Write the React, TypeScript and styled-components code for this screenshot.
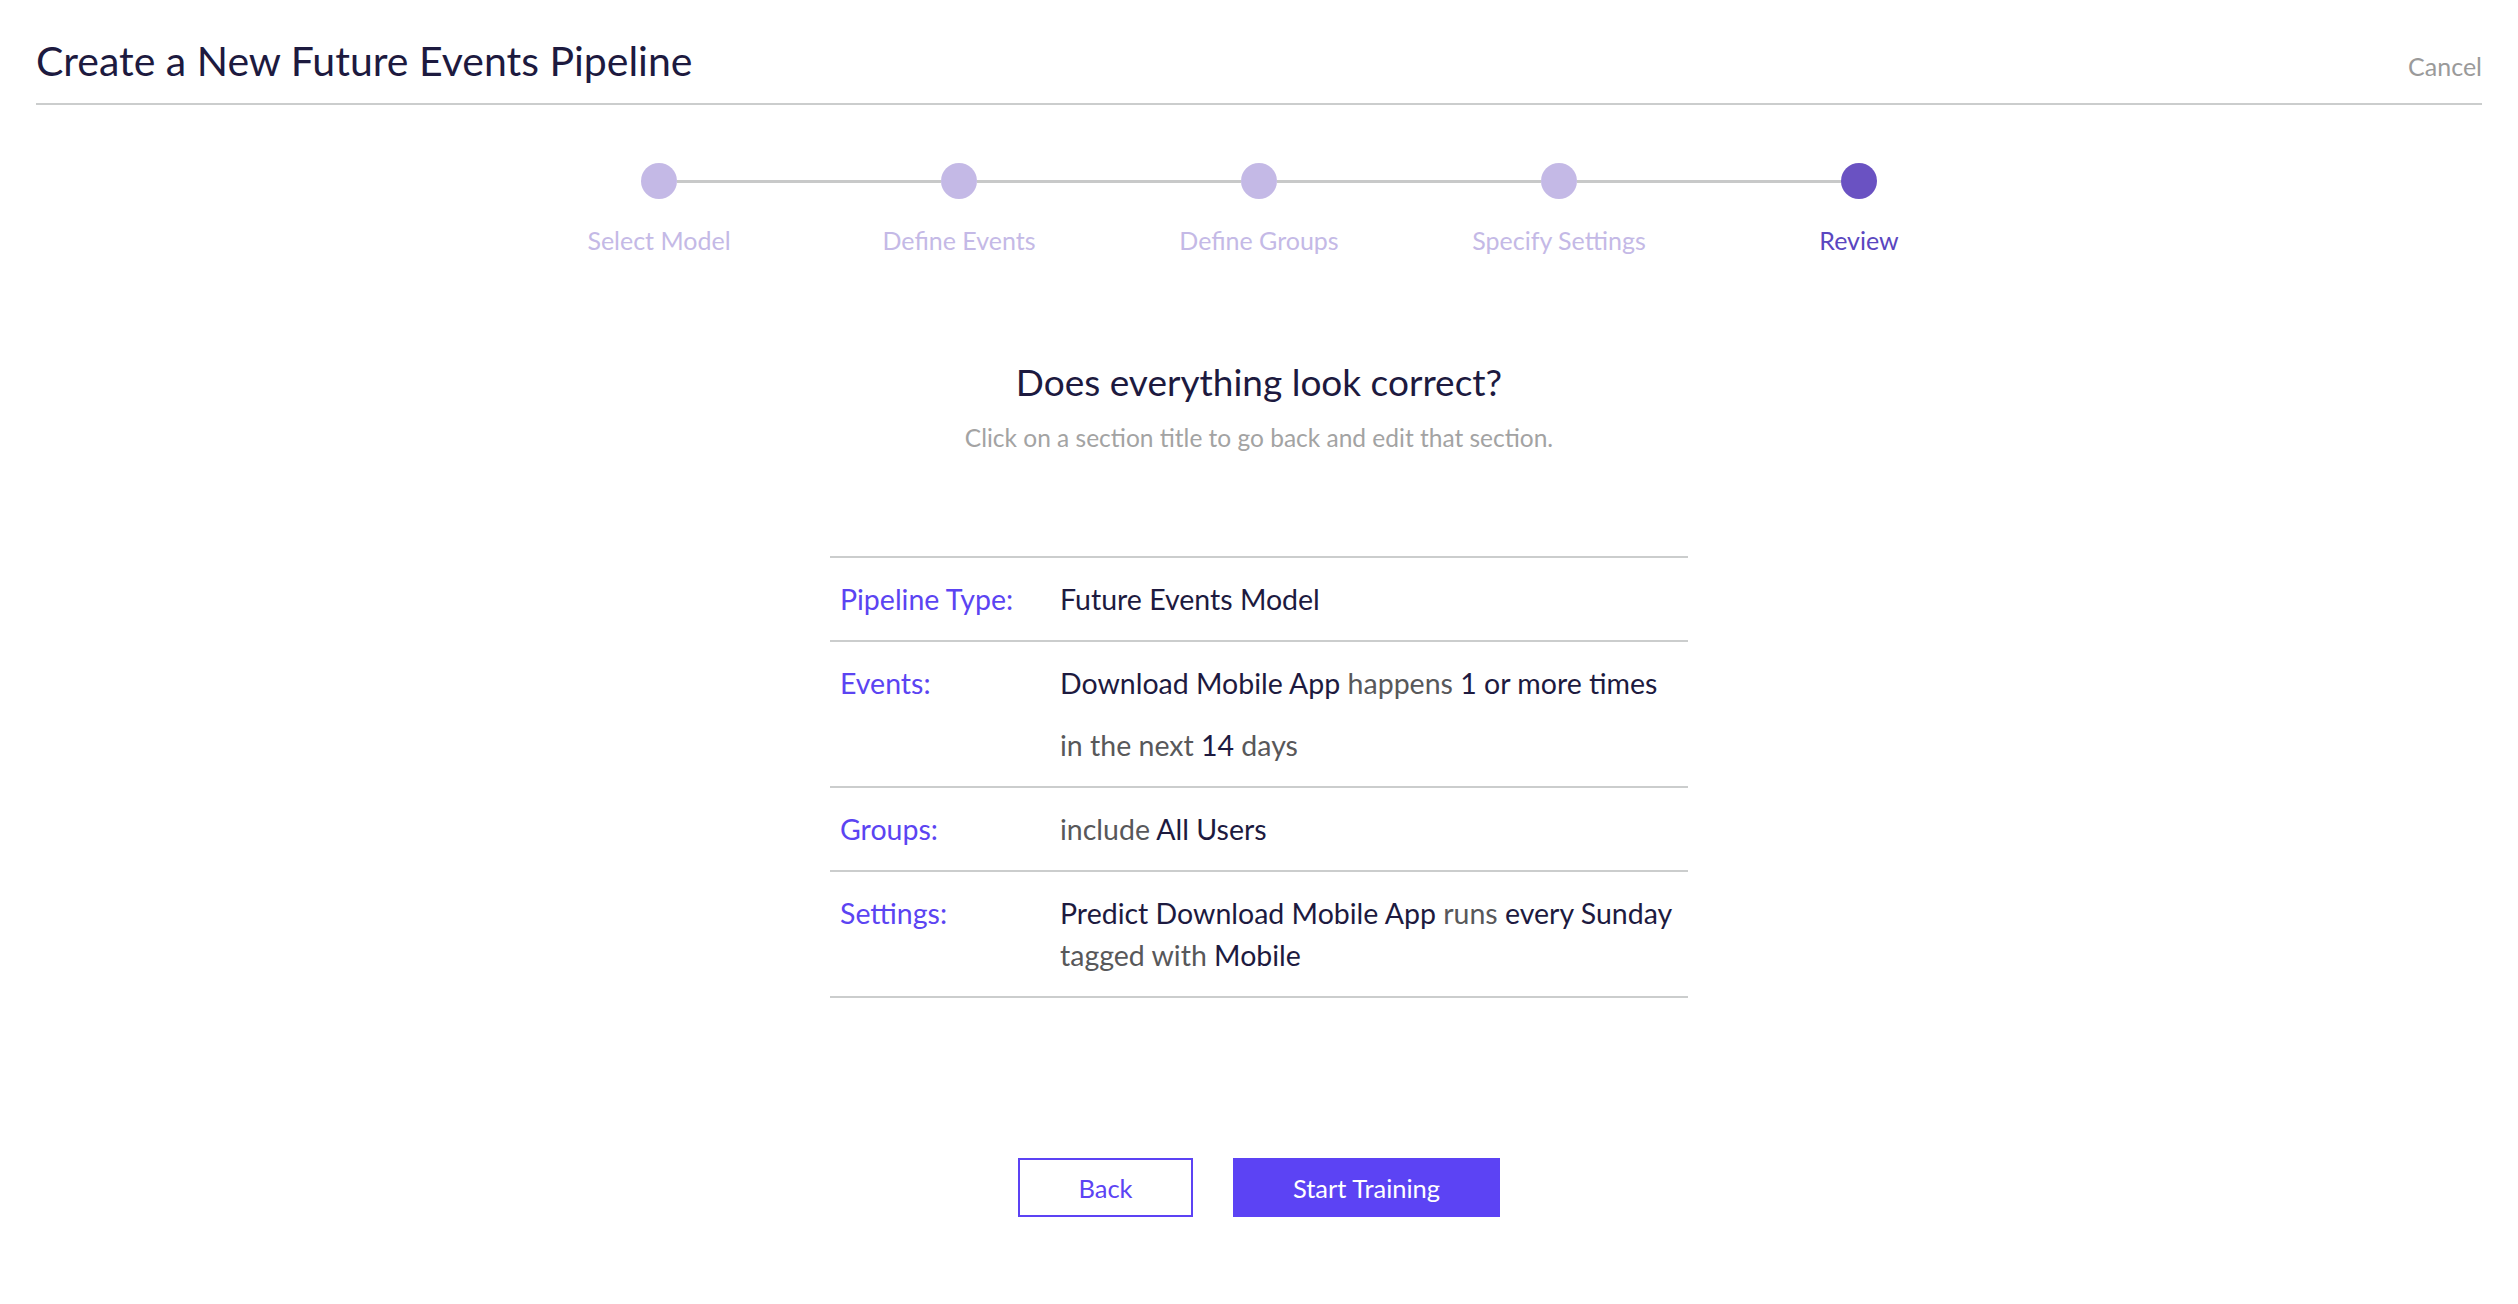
import React from 'react';
import styled, { createGlobalStyle } from 'styled-components';

const GlobalStyle = createGlobalStyle`
  body {
    margin: 0;
    background: #ffffff;
    font-family: Lato, 'Liberation Sans', sans-serif;
  }
`;

const Page = styled.div`
  padding: 0 36px;
  min-height: 1304px;
  box-sizing: border-box;
`;

const Header = styled.header`
  display: flex;
  align-items: center;
  justify-content: space-between;
  padding: 36px 0 18px;
  border-bottom: 2px solid #cbcdcd;
`;

const Title = styled.h1`
  margin: 0;
  font-size: 41px;
  line-height: 49px;
  font-weight: 400;
  color: #1d1a3f;
`;

const CancelLink = styled.a`
  margin-top: 10px;
  font-size: 25px;
  line-height: 30px;
  color: #9a9a9a;
  cursor: pointer;
`;

const Stepper = styled.ol`
  display: flex;
  justify-content: center;
  list-style: none;
  margin: 58px 0 0;
  padding: 0;
`;

const Step = styled.li`
  display: flex;
  flex-direction: column;
  align-items: center;
  width: 300px;
`;

const Track = styled.div`
  display: flex;
  align-items: center;
  width: 100%;
`;

const Segment = styled.span<{ $hidden?: boolean }>`
  flex: 1;
  height: 3px;
  background: ${(p) => (p.$hidden ? 'transparent' : '#c8c9c9')};
`;

const Dot = styled.span<{ $active?: boolean }>`
  width: 36px;
  height: 36px;
  border-radius: 50%;
  background: ${(p) => (p.$active ? '#6a52c2' : '#c4b9e6')};
`;

const StepLabel = styled.span<{ $active?: boolean }>`
  margin-top: 26px;
  font-size: 25px;
  line-height: 30px;
  color: ${(p) => (p.$active ? '#5a46c0' : '#c4b9e6')};
`;

const Intro = styled.section`
  display: flex;
  flex-direction: column;
  align-items: center;
  margin-top: 104px;
`;

const Heading = styled.h2`
  margin: 0;
  font-size: 37px;
  line-height: 45px;
  font-weight: 400;
  color: #1d1a3f;
`;

const Hint = styled.p`
  margin: 19px 0 0;
  font-size: 24.5px;
  line-height: 30px;
  color: #a3a3a3;
`;

const Summary = styled.dl`
  width: 858px;
  margin: 103px auto 0;
  border-bottom: 2px solid #cbcdcd;
`;

const SummaryRow = styled.div`
  display: grid;
  grid-template-columns: 230px 1fr;
  border-top: 2px solid #cbcdcd;
  padding: 20px 0;
`;

const RowTitle = styled.dt`
  padding-left: 10px;
  font-size: 28.5px;
  line-height: 42px;
  color: #5b44f2;
  cursor: pointer;
`;

const RowValue = styled.dd`
  margin: 0;
  font-size: 28.5px;
  line-height: 42px;
  color: #58585a;
`;

const Line = styled.div<{ $gap?: number }>`
  white-space: nowrap;
  margin-top: ${(p) => p.$gap ?? 0}px;
`;

const Strong = styled.span`
  color: #1d1a3f;
`;

const Actions = styled.div`
  display: flex;
  justify-content: center;
  gap: 40px;
  margin-top: 160px;
`;

const Button = styled.button<{ $primary?: boolean }>`
  height: 59px;
  box-sizing: border-box;
  padding: 0;
  font-family: Lato, 'Liberation Sans', sans-serif;
  font-size: 25.5px;
  border: 2px solid #5c43f4;
  background: ${(p) => (p.$primary ? '#5c43f4' : '#ffffff')};
  color: ${(p) => (p.$primary ? '#ffffff' : '#5c43f4')};
  cursor: pointer;
`;

const steps = ['Select Model', 'Define Events', 'Define Groups', 'Specify Settings', 'Review'];
const current = 4;

export default function App() {
  return (
    <Page>
      <GlobalStyle />
      <Header>
        <Title>Create a New Future Events Pipeline</Title>
        <CancelLink>Cancel</CancelLink>
      </Header>

      <Stepper>
        {steps.map((s, i) => (
          <Step key={s}>
            <Track>
              <Segment $hidden={i === 0} />
              <Dot $active={i === current} />
              <Segment $hidden={i === steps.length - 1} />
            </Track>
            <StepLabel $active={i === current}>{s}</StepLabel>
          </Step>
        ))}
      </Stepper>

      <Intro>
        <Heading>Does everything look correct?</Heading>
        <Hint>Click on a section title to go back and edit that section.</Hint>
      </Intro>

      <Summary>
        <SummaryRow>
          <RowTitle>Pipeline Type:</RowTitle>
          <RowValue>
            <Strong>Future Events Model</Strong>
          </RowValue>
        </SummaryRow>
        <SummaryRow>
          <RowTitle>Events:</RowTitle>
          <RowValue>
            <Line>
              <Strong>Download Mobile App</Strong> happens <Strong>1 or more times</Strong>
            </Line>
            <Line $gap={20}>
              in the next <Strong>14</Strong> days
            </Line>
          </RowValue>
        </SummaryRow>
        <SummaryRow>
          <RowTitle>Groups:</RowTitle>
          <RowValue>
            include <Strong>All Users</Strong>
          </RowValue>
        </SummaryRow>
        <SummaryRow>
          <RowTitle>Settings:</RowTitle>
          <RowValue>
            <Line>
              <Strong>Predict Download Mobile App</Strong> runs <Strong>every Sunday</Strong>
            </Line>
            <Line>
              tagged with <Strong>Mobile</Strong>
            </Line>
          </RowValue>
        </SummaryRow>
      </Summary>

      <Actions>
        <Button style={{ width: 175 }}>Back</Button>
        <Button $primary style={{ width: 267 }}>
          Start Training
        </Button>
      </Actions>
    </Page>
  );
}
